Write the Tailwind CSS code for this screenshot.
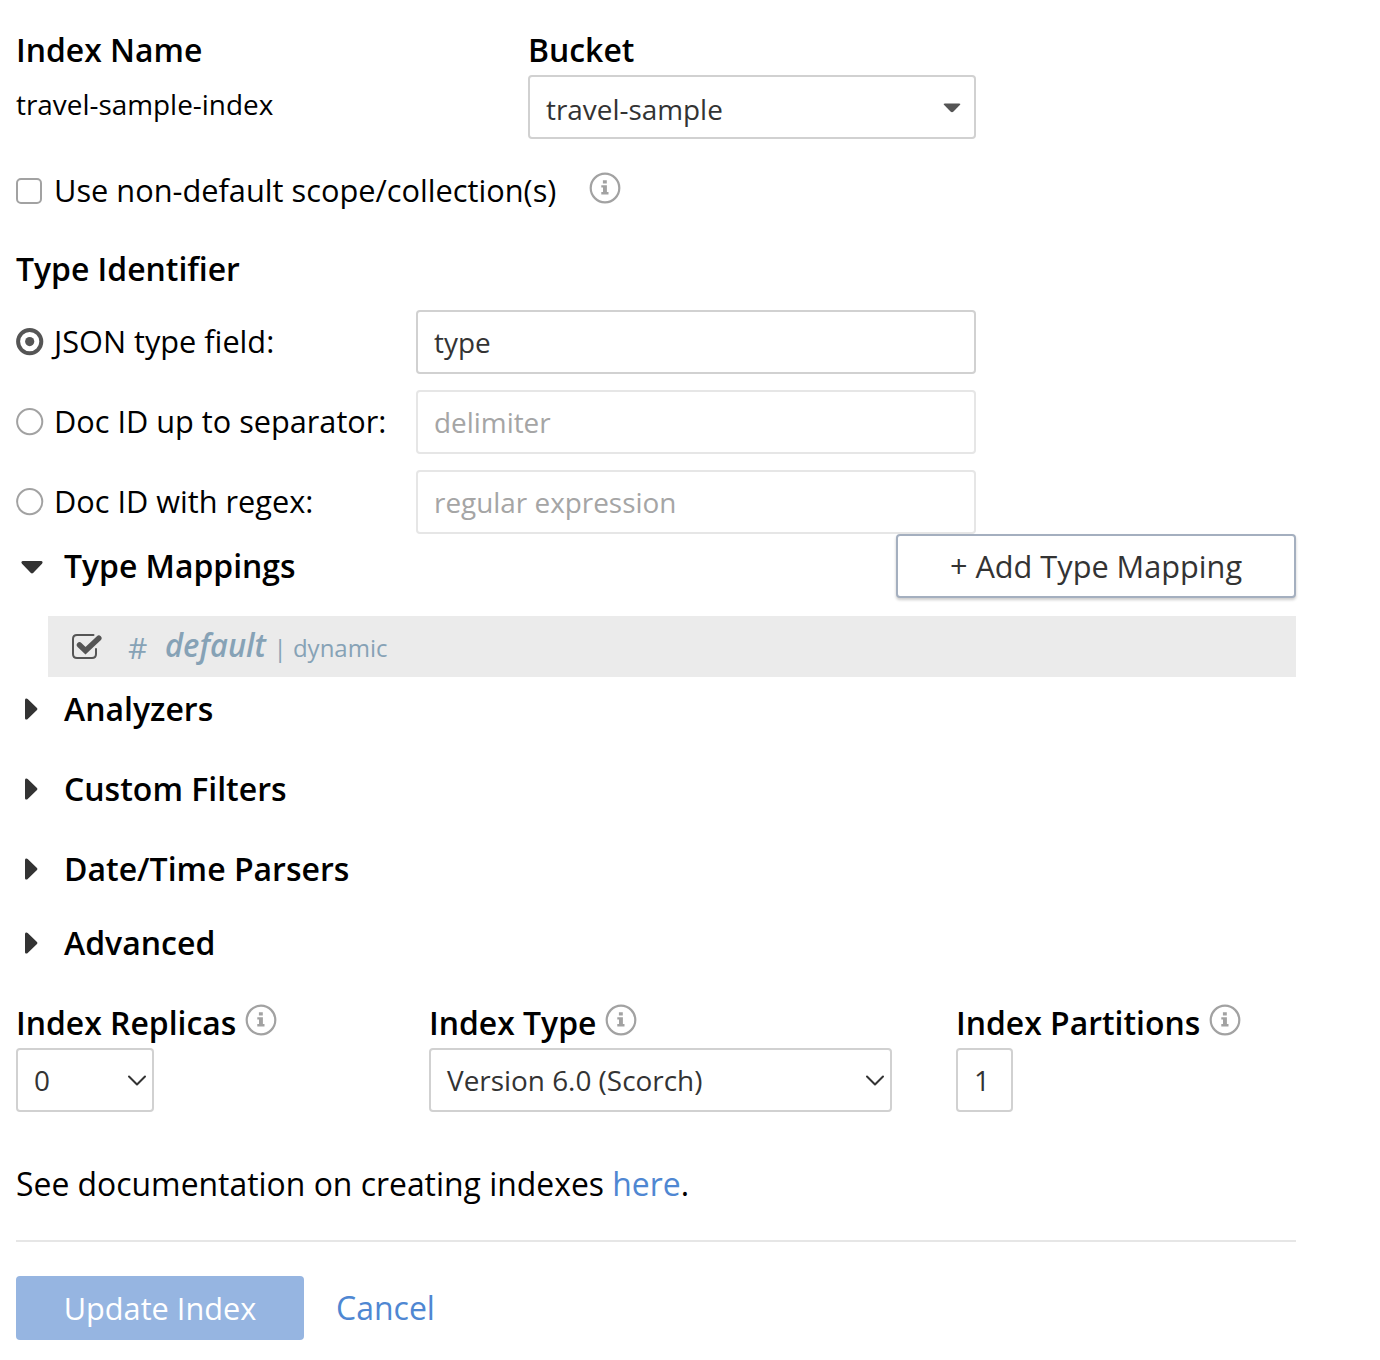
<!DOCTYPE html>
<html lang="en">
<head>
<meta charset="utf-8">
<title>Edit Index</title>
<script src="https://cdn.jsdelivr.net/npm/@tailwindcss/browser@4"></script>
</head>
<body class="bg-white text-black font-['Open_Sans',sans-serif]">
<svg class="hidden">
  <symbol id="info" viewBox="0 0 32 32">
    <circle cx="16" cy="16" r="14.3" fill="none" stroke="#a2a2a2" stroke-width="2.2"/>
    <path fill="#a2a2a2" d="M13.9 8.2h3.9v3.2h-3.9zM12.3 13.3h5.6v6.8h1.6v2.3h-7.2v-2.3h1.7v-4.5h-1.7z"/>
  </symbol>
  <symbol id="caret" viewBox="0 0 14 24">
    <path fill="#333" d="M1 3C1 1.300 2.600.900 3.700 2l9.300 8.900q.9 1.100 0 2.200l-9.300 8.900C2.600 23.100 1 22.700 1 21z"/>
  </symbol>
  <symbol id="chevron" viewBox="0 0 20 14">
    <path fill="none" stroke="#333" stroke-width="2" stroke-linecap="round" stroke-linejoin="round" d="M2 3.500l8 8 8-8"/>
  </symbol>
</svg>
<main class="w-[1296px] pl-4 pt-[26px]">

  <section class="flex h-[113px]">
    <div class="w-[512px]">
      <h2 class="h-[58px] text-[31.9px] leading-[48px] font-semibold">Index Name</h2>
      <p class="text-[27.9px] leading-[40px]">travel-sample-index</p>
    </div>
    <div class="w-[448px]">
      <h2 class="h-[49px] text-[31.9px] leading-[48px] font-semibold">Bucket</h2>
      <div class="flex h-16 items-center justify-between rounded-[4px] border-2 border-[#d1d1d1] pl-4 pr-[13px] text-[27.9px] text-[#333]">
        <span class="pt-1 leading-[40px]">travel-sample</span>
        <svg class="mt-[2px] h-[10px] w-[18px]" viewBox="0 0 18 10"><path fill="#555" d="M2 .500h14q2.200 0 .8 1.500l-6.300 6.500q-1.500 1.500-3 0L1.200 2Q-.2.500 2 .500z"/></svg>
      </div>
    </div>
  </section>

  <label class="mt-[28px] flex h-12 items-center">
    <span class="size-[25.500px] rounded-[5px] border-2 border-[#a2a2a2]"></span>
    <span class="mb-[2px] ml-[12.500px] text-[30.75px] leading-[48px]">Use non-default scope/collection(s)</span>
    <svg class="mb-[6px] ml-[33px] size-8"><use href="#info"/></svg>
  </label>

  <section class="mt-[30px]">
    <h2 class="h-[65px] text-[31.9px] leading-[48px] font-semibold">Type Identifier</h2>
    <div class="flex w-[960px] flex-col gap-4 text-[30.7px]">
      <div class="flex h-16 items-center">
        <svg class="size-7" viewBox="0 0 28 28"><circle cx="13.700" cy="13.600" r="11.600" fill="none" stroke="#555" stroke-width="4"/><circle cx="13.700" cy="13.600" r="4.600" fill="#555"/></svg>
        <span class="mb-[2px] w-[372px] pl-[10px]">JSON type field:</span>
        <input class="h-16 w-[560px] rounded-[4px] border-2 border-[#d1d1d1] px-4 text-[27.9px] text-[#333]" value="type">
      </div>
      <div class="flex h-16 items-center">
        <svg class="size-7" viewBox="0 0 28 28"><circle cx="13.700" cy="13.600" r="12.600" fill="none" stroke="#a2a2a2" stroke-width="2"/></svg>
        <span class="mb-[2px] w-[372px] pl-[10px]">Doc ID up to separator:</span>
        <input class="h-16 w-[560px] rounded-[4px] border-2 border-[#e6e6e6] px-4 text-[27.9px] placeholder:text-[#a5a5a5]" placeholder="delimiter">
      </div>
      <div class="flex h-16 items-center">
        <svg class="size-7" viewBox="0 0 28 28"><circle cx="13.700" cy="13.600" r="12.600" fill="none" stroke="#a2a2a2" stroke-width="2"/></svg>
        <span class="mb-[2px] w-[372px] pl-[10px]">Doc ID with regex:</span>
        <input class="h-16 w-[560px] rounded-[4px] border-2 border-[#e6e6e6] px-4 text-[27.9px] placeholder:text-[#a5a5a5]" placeholder="regular expression">
      </div>
    </div>
  </section>

  <section>
    <div class="flex h-[82px] items-start justify-between">
      <div class="flex h-16 items-center">
        <div class="flex w-12 pl-1"><svg class="ml-[5px] mt-px h-6 w-[14px] rotate-90"><use href="#caret"/></svg></div>
        <h2 class="text-[31.9px] leading-[48px] font-semibold">Type Mappings</h2>
      </div>
      <button class="h-16 w-[400px] rounded-[4px] border-2 border-[#a4afbf] bg-white text-[30.7px] text-[#333] shadow-[0_2px_3px_rgba(0,0,0,0.2)]">+ Add Type Mapping</button>
    </div>
    <div class="ml-8 flex h-[61px] items-center bg-[#ebebeb] pl-6 text-[#86a2b6]">
      <svg class="h-[26px] w-[30px]" viewBox="0 0 30 26"><path fill="none" stroke="#555" stroke-width="2" stroke-linecap="round" d="M21.500 1H5Q1 1 1 5v15q0 4 4 4h15q4 0 4-4v-5"/><path fill="none" stroke="#555" stroke-width="5.500" stroke-linejoin="miter" stroke-linecap="round" d="M7.500 11l6 5.800L26.800 4.200"/></svg>
      <span class="ml-[26px] mt-px w-[37px] text-[30px]">#</span>
      <span class="mb-[3px] inline-block origin-left scale-x-[.965] w-[100px] text-[32px] font-semibold italic">default</span>
      <span class="ml-[8.500px] mt-[3px] text-[24px]">| dynamic</span>
    </div>
    <div class="flex h-[72px] items-start pt-[8px]">
      <svg class="ml-[8px] mr-[26px] mt-[12px] h-6 w-[14px]"><use href="#caret"/></svg>
      <h2 class="text-[32px] leading-[48px] font-semibold">Analyzers</h2>
    </div>
    <div class="flex h-20 items-center">
      <svg class="ml-[8px] mr-[26px] h-6 w-[14px]"><use href="#caret"/></svg>
      <h2 class="text-[32px] leading-[48px] font-semibold">Custom Filters</h2>
    </div>
    <div class="flex h-20 items-center">
      <svg class="ml-[8px] mr-[26px] h-6 w-[14px]"><use href="#caret"/></svg>
      <h2 class="text-[32px] leading-[48px] font-semibold">Date/Time Parsers</h2>
    </div>
    <div class="flex h-[68px] items-center">
      <svg class="ml-[8px] mr-[26px] h-6 w-[14px]"><use href="#caret"/></svg>
      <h2 class="text-[32px] leading-[48px] font-semibold">Advanced</h2>
    </div>
  </section>

  <section class="mt-[22px] flex">
    <div class="w-[413px]">
      <h2 class="flex h-[49px] items-start text-[31.9px] leading-[48px] font-semibold">Index Replicas<svg class="ml-[8.500px] mt-[5px] size-8"><use href="#info"/></svg></h2>
      <div class="flex h-16 w-[138px] items-center justify-between rounded-[4px] border-2 border-[#d1d1d1] pl-4 pr-[5px] text-[27.9px] leading-[40px] text-[#333]">0<svg class="h-[14px] w-5"><use href="#chevron"/></svg></div>
    </div>
    <div class="w-[527px]">
      <h2 class="flex h-[49px] items-start text-[31.9px] leading-[48px] font-semibold">Index Type<svg class="ml-[8.500px] mt-[5px] size-8"><use href="#info"/></svg></h2>
      <div class="flex h-16 w-[463px] items-center justify-between rounded-[4px] border-2 border-[#d1d1d1] pl-4 pr-[5px] text-[27.9px] leading-[40px] text-[#333]">Version 6.0 (Scorch)<svg class="h-[14px] w-5"><use href="#chevron"/></svg></div>
    </div>
    <div>
      <h2 class="flex h-[49px] items-start text-[31.9px] leading-[48px] font-semibold">Index Partitions<svg class="ml-[8.500px] mt-[5px] size-8"><use href="#info"/></svg></h2>
      <input class="h-16 w-[57px] rounded-[4px] border-2 border-[#d1d1d1] pl-4 text-[27.9px] text-[#333]" value="1">
    </div>
  </section>

  <p class="mt-12 h-20 border-b-2 border-[#e6e6e6] text-[31.9px] leading-[48px] box-content">See documentation on creating indexes <a class="text-[#4f87d2]">here</a>.</p>

  <div class="mt-[34px] flex h-16 items-center gap-8 text-[32px]">
    <button class="h-16 w-[288px] rounded-[4px] bg-[#96b5e1] text-[30.7px] text-white">Update Index</button>
    <a class="leading-[48px] text-[#4f87d2]">Cancel</a>
  </div>
</main>
</body>
</html>
